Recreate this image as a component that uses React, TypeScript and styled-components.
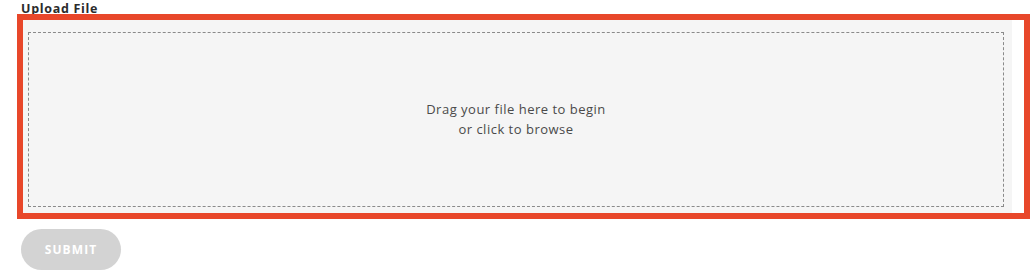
import { createGlobalStyle, styled } from "styled-components";

const GlobalStyle = createGlobalStyle`
  html, body {
    margin: 0;
    padding: 0;
    background: #ffffff;
  }
  body {
    font-family: "Open Sans", "Liberation Sans", sans-serif;
  }
`;

const Page = styled.div`
  width: 1034px;
  height: 274px;
  padding: 2px 4px 0 17px;
  box-sizing: border-box;
  display: flex;
  flex-direction: column;
`;

const Label = styled.label`
  font-family: "Open Sans", sans-serif;
  font-size: 12.5px;
  font-weight: 700;
  color: #2b2b2b;
  line-height: 14px;
  padding-left: 4px;
  height: 12px;
  letter-spacing: 0.7px;
`;

const Highlight = styled.div`
  height: 205px;
  width: 1013px;
  box-sizing: border-box;
  border: 6px solid #e8472a;
  background: #ffffff;
  display: flex;
  padding-right: 12px;
`;

const DropZone = styled.div`
  flex: 1;
  background: #f5f5f5;
  padding: 12px 8px 6px 5px;
  display: flex;
`;

const DashedArea = styled.div`
  flex: 1;
  border: 1px dashed #8a8a8a;
  display: flex;
  flex-direction: column;
  align-items: center;
  justify-content: center;
  cursor: pointer;
`;

const Hint = styled.p`
  margin: 0;
  font-family: "Open Sans", sans-serif;
  font-size: 13px;
  line-height: 20px;
  color: #4a4a4a;
  text-align: center;
  letter-spacing: 0.5px;
  padding-bottom: 2px;
`;

const SubmitButton = styled.button`
  margin-top: 10px;
  margin-left: 4px;
  width: 100px;
  height: 41px;
  border: none;
  border-radius: 21px;
  background: #d3d3d3;
  color: #ffffff;
  font-family: "Open Sans", sans-serif;
  font-weight: 700;
  font-size: 12px;
  letter-spacing: 1.1px;
  cursor: not-allowed;
`;

const App = () => {
  return (
    <>
      <GlobalStyle />
      <Page>
        <Label>Upload File</Label>
        <Highlight>
          <DropZone>
            <DashedArea>
              <Hint>
                Drag your file here to begin
                <br />
                or click to browse
              </Hint>
            </DashedArea>
          </DropZone>
        </Highlight>
        <SubmitButton disabled>SUBMIT</SubmitButton>
      </Page>
    </>
  );
};

export default App;
